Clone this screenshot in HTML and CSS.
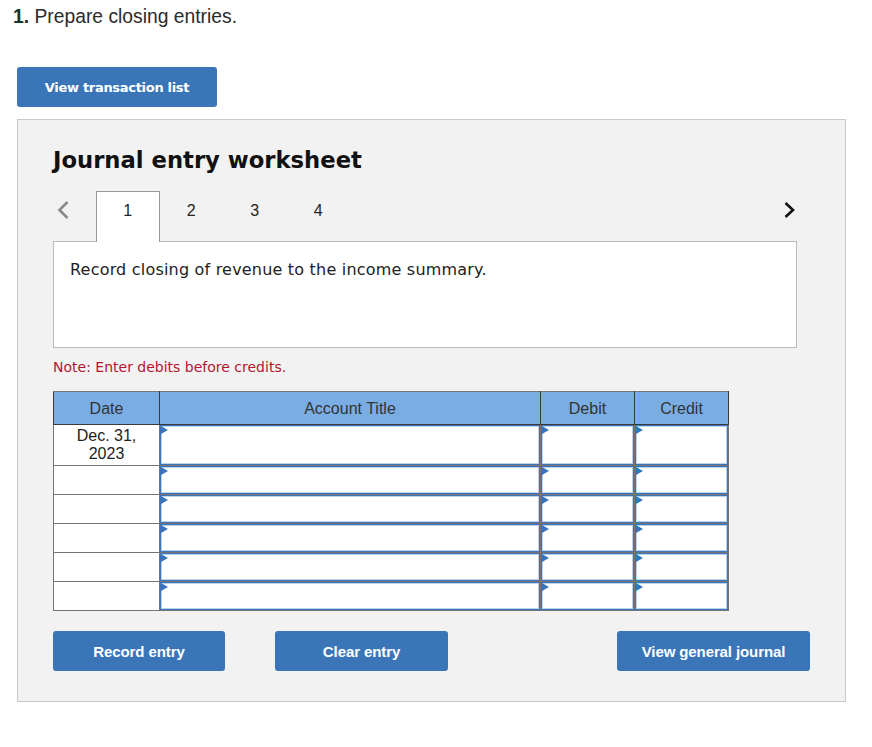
FILE: index.html
```html
<!DOCTYPE html>
<html>
<head>
<meta charset="utf-8">
<link rel="stylesheet" href="styles.css">
</head>
<body>
<p class="question"><b>1.</b> Prepare closing entries.</p>
<button class="btn btn-list">View transaction list</button>
<section class="panel">
  <h2 class="title">Journal entry worksheet</h2>
  <div class="tabs">
    <span class="arrow arrow-left"><svg width="14" height="20" viewBox="0 0 14 20"><path d="M11.5 2 L3.5 10 L11.5 18" fill="none" stroke="#8a8a8a" stroke-width="2.6"/></svg></span>
    <span class="tab active">1</span>
    <span class="tab">2</span>
    <span class="tab">3</span>
    <span class="tab">4</span>
    <span class="arrow arrow-right"><svg width="14" height="20" viewBox="0 0 14 20"><path d="M2.5 3 L10 10 L2.5 17" fill="none" stroke="#111" stroke-width="2.6"/></svg></span>
  </div>
  <div class="desc">Record closing of revenue to the income summary.</div>
  <p class="note">Note: Enter debits before credits.</p>
  <table class="journal">
    <thead>
      <tr><th class="c-date">Date</th><th class="c-acct">Account Title</th><th class="c-amt">Debit</th><th class="c-amt">Credit</th></tr>
    </thead>
    <tbody>
      <tr class="first"><td class="date">Dec. 31,<br>2023</td><td><div class="inp"></div></td><td><div class="inp"></div></td><td><div class="inp"></div></td></tr>
      <tr><td class="date"></td><td><div class="inp"></div></td><td><div class="inp"></div></td><td><div class="inp"></div></td></tr>
      <tr><td class="date"></td><td><div class="inp"></div></td><td><div class="inp"></div></td><td><div class="inp"></div></td></tr>
      <tr><td class="date"></td><td><div class="inp"></div></td><td><div class="inp"></div></td><td><div class="inp"></div></td></tr>
      <tr><td class="date"></td><td><div class="inp"></div></td><td><div class="inp"></div></td><td><div class="inp"></div></td></tr>
      <tr><td class="date"></td><td><div class="inp"></div></td><td><div class="inp"></div></td><td><div class="inp"></div></td></tr>
    </tbody>
  </table>
  <div class="actions">
    <button class="btn btn-record">Record entry</button>
    <button class="btn btn-clear">Clear entry</button>
    <button class="btn btn-journal">View general journal</button>
  </div>
</section>
</body>
</html>
```
FILE: styles.css
```css
* { box-sizing: border-box; }
body {
  margin: 0;
  padding: 0 0 0 17px;
  background: #fff;
  font-family: "Liberation Sans", Arial, sans-serif;
  color: #222;
}
.question {
  margin: 6px 0 0 -4px;
  font-size: 19.3px;
  line-height: 22px;
  color: #2b2b2b;
}
.question b { font-weight: bold; }
.btn {
  display: inline-flex;
  align-items: center;
  justify-content: center;
  height: 40px;
  border: none;
  border-radius: 3px;
  background: #3a75b8;
  color: #fff;
  font-weight: bold;
  cursor: pointer;
}
.btn-list {
  margin-top: 39px;
  width: 200px;
  font-family: "DejaVu Sans", Verdana, sans-serif;
  font-size: 13px;
  letter-spacing: -0.3px;
}
.panel {
  margin-top: 12px;
  width: 829px;
  height: 583px;
  background: #f2f2f2;
  border: 1px solid #c9c9c9;
  padding: 25px 48px 0 35px;
}
.title {
  margin: 0;
  font-family: "DejaVu Sans", Verdana, sans-serif;
  font-size: 22.7px;
  line-height: 30px;
  font-weight: bold;
  color: #111;
}
.tabs {
  display: flex;
  align-items: stretch;
  height: 51px;
  margin-top: 16px;
  position: relative;
  z-index: 1;
}
.arrow {
  display: flex;
  align-items: flex-start;
  padding-top: 9px;
}
.arrow-left { width: 43px; padding-left: 3px; }
.arrow-right { margin-left: auto; width: 20px; justify-content: flex-end; }
.tab {
  width: 63.5px;
  display: flex;
  align-items: flex-start;
  justify-content: center;
  padding-top: 10px;
  font-size: 16px;
  line-height: 18px;
  color: #222;
  border: 1px solid transparent;
  border-bottom: none;
}
.tab.active {
  background: #fff;
  border-color: #999;
  height: 51px;
}
.desc {
  margin-top: -1px;
  height: 107px;
  background: #fff;
  border: 1px solid #b9b9b9;
  padding: 18px 16px;
  font-family: "DejaVu Sans", Verdana, sans-serif;
  font-size: 16px;
  letter-spacing: 0.2px;
  line-height: 20px;
  color: #222;
}
.note {
  margin: 9px 0 0;
  font-family: "DejaVu Sans", Verdana, sans-serif;
  font-size: 14px;
  line-height: 20px;
  color: #b2162f;
}
.journal {
  margin-top: 14px;
  border-collapse: collapse;
  width: 676px;
  table-layout: fixed;
}
.journal th {
  height: 33px;
  background: #7aade3;
  font-weight: normal;
  font-size: 16px;
  color: #333;
  border: 1px solid #3a3a3a;
  border-top-color: #777;
  padding: 1px 0 0;
}
.c-date { width: 106px; }
.c-acct { width: 381px; }
.c-amt { width: 94px; }
.journal td {
  border: 1px solid #747474;
  padding: 0;
  background: #fff;
  height: 29px;
}
.journal tr.first td { height: 41px; }
.journal td.date {
  text-align: center;
  vertical-align: top;
  font-size: 16px;
  line-height: 18px;
  padding-top: 2px;
  color: #222;
}
.inp {
  position: relative;
  height: 100%;
  min-height: 27px;
  border: 1px solid #3d74b9;
  box-shadow: inset 0 0 0 1px #bcd3ee;
  background: #fff;
}
.journal tr.first .inp { min-height: 39px; }
.inp::before {
  content: "";
  position: absolute;
  left: 0;
  top: 0;
  border-left: 7px solid #3a72bb;
  border-top: 4.5px solid transparent;
  border-bottom: 4.5px solid transparent;
}
.actions {
  display: flex;
  margin-top: 20px;
  width: 757px;
}
.actions .btn {
  font-family: "Liberation Sans", Arial, sans-serif;
  font-size: 15px;
  letter-spacing: -0.1px;
}
.btn-record { width: 172px; }
.btn-clear { width: 173px; margin-left: 50px; }
.btn-journal { width: 193px; margin-left: auto; }
```
